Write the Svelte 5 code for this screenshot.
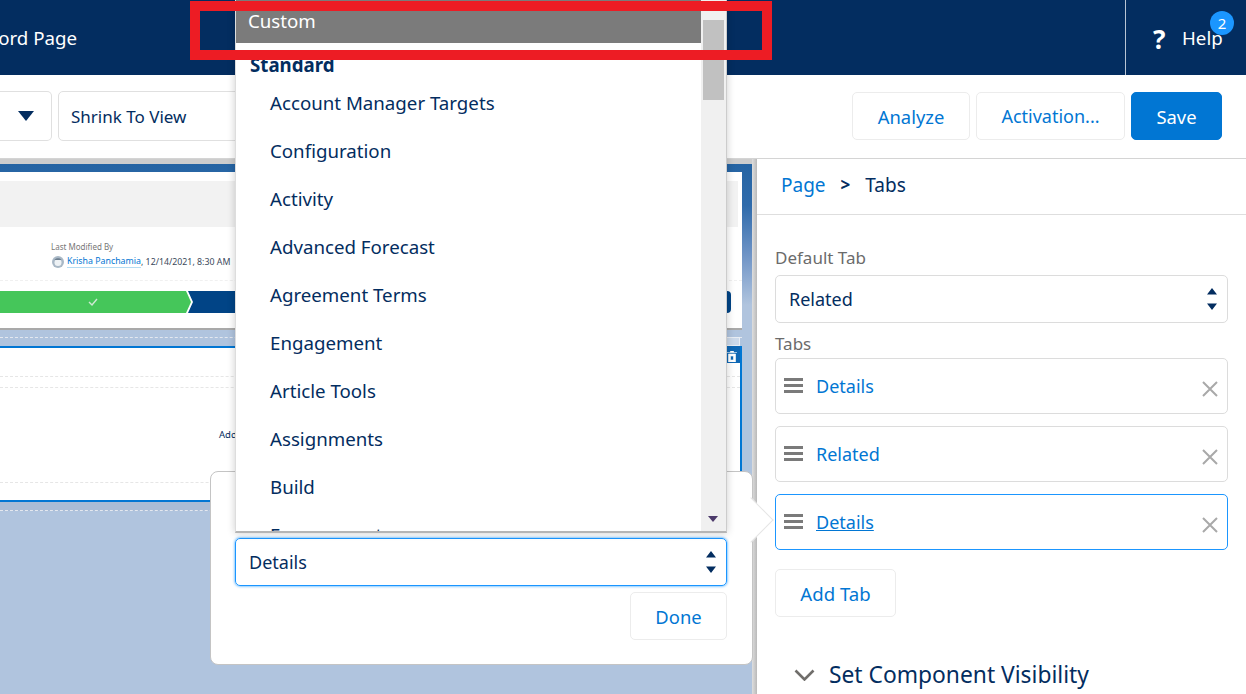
<script>
  const items = ['Account Manager Targets','Configuration','Activity','Advanced Forecast','Agreement Terms','Engagement','Article Tools','Assignments','Build','Engagement'];
</script>

<div class="page">
  <header class="top">
    <div class="title"><span>Record Page</span></div>
    <div class="help">
      <span class="q">?</span>
      <span class="helptxt">Help</span>
      <span class="badge">2</span>
    </div>
  </header>

  <div class="toolbar">
    <div class="tbl">
      <div class="box stub"><span class="tri"></span></div>
      <div class="box shrink">Shrink To View</div>
    </div>
    <div class="tbr">
      <button class="btn an">Analyze</button>
      <button class="btn ac">Activation...</button>
      <button class="btn save">Save</button>
    </div>
  </div>

  <div class="main">
    <div class="canvas">
      <div class="preview">
        <div class="pagehead"><div class="grey"></div>
          <div class="meta">
            <div class="mlabel">Last Modified By</div>
            <div class="mval">
              <svg class="av" width="12" height="12" viewBox="0 0 12 12"><circle cx="6" cy="6" r="6" fill="#a9b8c6"/><circle cx="6" cy="6.500" r="3.500" fill="#eef2f5"/><path d="M2.500 4c1-2.500 6-2.500 7 0z" fill="#6d7f90"/></svg>
              <span class="mlink">Krisha Panchamia</span>, 12/14/2021, 8:30 AM
            </div>
          </div>
          <div class="hr"></div>
          <div class="path">
            <div class="pg"><svg width="10" height="8" viewBox="0 0 10 8"><path d="M1 4l3 3 5-6" fill="none" stroke="#cfe9d4" stroke-width="1.400"/></svg></div>
            <div class="pb"></div>
          </div>
        </div>
      </div>
      <div class="band"></div>
      <div class="tabs">
        <div class="rule1"></div>
        <div class="rule2"></div>
        <div class="add">Add</div>
        <div class="rule3"></div>
        <div class="ghost"></div>
        <div class="tool">
          <svg width="10" height="11" viewBox="0 0 10 11"><path d="M0 1.500h10M3.500 1.500V0h3v1.500M1.500 3h7v8h-7z M3.500 5v4h3V5z" fill="#fff" fill-rule="evenodd" stroke="#fff" stroke-width=".6"/></svg>
        </div>
      </div>
      <div class="bar2"></div>
    </div>
    <div class="gutter"></div>

    <aside class="side">
      <div class="crumbs"><span class="lnk">Page</span><b>&gt;</b><span>Tabs</span></div>
      <div class="sbody">
        <div class="lbl">Default Tab</div>
        <div class="sel">Related
          <svg class="updown" width="10" height="22" viewBox="0 0 10 22"><path d="M5 0l5 6.500h-10z M5 22l-5-6.500h10z" fill="#032d60"/></svg>
        </div>
        <div class="lbl l2">Tabs</div>
        {#each [['Details',false],['Related',false],['Details',true]] as [name, on]}
          <div class="tabrow" class:on>
            <svg class="grip" width="19" height="15" viewBox="0 0 19 15"><path d="M0 1.500h19M0 7.500h19M0 13.500h19" stroke="#7a7a7a" stroke-width="2.800"/></svg>
            <span class="tname" class:u={on}>{name}</span>
            <svg class="x" width="16" height="16" viewBox="0 0 16 16"><path d="M1 1l14 14M15 1l-14 14" stroke="#a9a9a9" stroke-width="2"/></svg>
          </div>
        {/each}
        <button class="btn addtab">Add Tab</button>
        <div class="vis">
          <svg width="21" height="12" viewBox="0 0 21 12"><path d="M1.500 1.500l9 9 9-9" fill="none" stroke="#706e6b" stroke-width="2.600"/></svg>
          <span>Set Component Visibility</span>
        </div>
      </div>
    </aside>
  </div>

  <div class="pop">
    <div class="psel">Details
      <svg class="updown" width="10" height="22" viewBox="0 0 10 22"><path d="M5 0l5 6.500h-10z M5 22l-5-6.500h10z" fill="#032d60"/></svg>
    </div>
    <button class="btn done">Done</button>
    <span class="nub"></span>
  </div>

  <div class="drop">
    <div class="list">
      <div class="custom">Custom</div>
      <div class="std">Standard</div>
      {#each items as it}<div class="it">{it}</div>{/each}
    </div>
    <div class="scroll"><div class="thumb"></div><span class="sdown"></span></div>
  </div>

  <div class="redbox"></div>
</div>

<style>
  :global(body){margin:0;overflow:hidden;background:#fff}
  .page{position:relative;width:1246px;height:694px;overflow:hidden;font-family:"Noto Sans","Open Sans",sans-serif;font-size:18.7px;color:#032d60;display:flex;flex-direction:column}
  .top{height:75px;background:#032d60;color:#fff;display:flex;justify-content:space-between;flex:none}
  .title{width:77px;display:flex;justify-content:flex-end;align-items:center;overflow:hidden;white-space:nowrap;padding-bottom:1px}
  .help{width:120px;border-left:1px solid #b8c4d4;position:relative;display:flex;align-items:center}
  .q{position:absolute;left:27px;top:21px;font-weight:700;font-size:26px;line-height:36px}
  .helptxt{position:absolute;left:56px;top:24px;line-height:28px}
  .badge{position:absolute;left:84px;top:11px;width:24px;height:24px;border-radius:50%;background:#1b96ff;font-size:15px;line-height:24px;text-align:center}
  .toolbar{height:84px;flex:none;display:flex;justify-content:space-between;align-items:flex-start;padding:16px 24px 0 0;box-sizing:border-box;border-bottom:1px solid #d4d4d4}
  .tbl,.tbr{display:flex;gap:6px}
  .box{height:50px;box-sizing:border-box;border:1px solid #e0e0e0;border-radius:5px;display:flex;align-items:center;font-size:17px}
  .stub{width:52px;border-left:none;border-radius:0 5px 5px 0;justify-content:flex-end;padding-right:17px}
  .tri{width:0;height:0;border-left:8px solid transparent;border-right:8px solid transparent;border-top:10px solid #032d60}
  .shrink{width:300px;padding:1px 0 0 12px}
  .btn{font:inherit;background:#fff;color:#0176d3;border:1px solid #ececec;border-radius:5px;height:48px;padding:0;font-size:18.4px}
  .tbr{margin-top:1px}
  .an{width:118px}.ac{width:149px;font-size:18px}
  .save{width:91px;background:#0176d3;color:#fff;border-color:#0176d3}
  .main{flex:1;display:flex;min-height:0}
  .canvas{width:752px;background:#b0c4de;flex:none;border-top:5px solid #cdcdcd;box-sizing:border-box;display:flex;flex-direction:column}
  .gutter{width:5px;flex:none;background:linear-gradient(90deg,#dedede,#b9b9b9)}
  .preview{height:166px;flex:none;padding-top:8px;box-sizing:border-box;background:linear-gradient(180deg,#2564a3 0,#2f6bab 25%,#6f94c6 55%,#b0c4de 85%)}
  .pagehead{position:relative;width:742px;height:158px;box-sizing:border-box;background:#fff;border-bottom:2px solid #a9a9a9}
  .grey{position:absolute;left:0;right:4px;top:9px;height:46px;background:#f2f2f2}
  .meta{position:absolute;left:51px;top:69px;font-size:8px;line-height:11px;color:#777;white-space:nowrap}
  .mval{display:flex;align-items:center;margin-top:4px;color:#3b4a5c;font-size:8.800px;white-space:pre}
  .av{margin:0 3px 0 1px;flex:none}
  .mlink{color:#0176d3;border-bottom:1px solid #b5dcf3}
  .hr{position:absolute;left:0;right:0;top:108px;border-top:1px dashed #f0f0f0}
  .path{position:absolute;left:0;width:731px;top:119px;height:22px;display:flex}
  .pg{width:191px;box-sizing:border-box;padding-right:6px;flex:none;background:#45c65a;display:flex;align-items:center;justify-content:center;clip-path:polygon(0 0,calc(100% - 5px) 0,100% 50%,calc(100% - 5px) 100%,0 100%)}
  .pb{flex:1;background:#014486;margin-left:-3px;border-radius:0 4px 4px 0;clip-path:polygon(0 0,100% 0,100% 100%,0 100%,5px 50%)}
  .band{width:742px;height:7px;flex:none;border-bottom:1px dashed #e4e8ef;margin-bottom:8px}
  .tabs{position:relative;width:742px;height:156px;box-sizing:border-box;background:#fff;border-top:2px solid #0176d3;border-bottom:2px solid #0176d3;border-right:2px solid #0176d3;flex:none}
  .rule1,.rule2,.rule3{position:absolute;left:0;right:0;border-top:1px dashed #e6e6e6}
  .rule1{top:28px}.rule2{top:39px}.rule3{top:134px}
  .add{position:absolute;left:219px;top:81px;font-size:9.500px;line-height:12px;color:#032d60}
  .ghost{position:absolute;left:700px;right:0;top:-11px;height:9px;background:#ccd9ea;border:1px solid #e8edf4;box-sizing:border-box}
  .tool{position:absolute;left:700px;right:0;top:-2px;height:17px;background:#0f68b5;display:flex;align-items:center;padding:3px 0 0 27px;box-sizing:border-box}
  .bar2{height:8px;width:100%;background:#a9bcd6;border-bottom:1px dashed #e4e8ef}
  .side{flex:1;background:#fff;min-width:0}
  .crumbs{height:56px;box-sizing:border-box;border-bottom:1px solid #dedede;display:flex;align-items:center;gap:15px;padding:0 0 4px 24px;font-size:19px}
  .crumbs b{font-size:17px}
  .lnk{color:#0176d3}
  .sbody{padding:30px 18px 0 18px}
  .lbl{font-size:17px;color:#6b6b6b;line-height:26px}
  .l2{margin-top:8px;margin-bottom:1px}
  .sel,.psel{position:relative;height:48px;box-sizing:border-box;border:1px solid #dcdcdc;border-radius:5px;display:flex;align-items:center;padding-left:13px;margin-top:4px;font-size:18px}
  .updown{position:absolute;right:10px;top:12px}
  .tabrow{position:relative;height:56px;box-sizing:border-box;border:1px solid #dcdcdc;border-radius:5px;margin-bottom:12px;display:flex;align-items:center;padding:0 0 1px 8px}
  .tabrow.on{border-color:#1b96ff}
  .grip{flex:none}
  .tname{margin-left:13px;color:#0176d3;font-size:18px}
  .u{text-decoration:underline}
  .x{position:absolute;right:9px;top:22px}
  .addtab{width:121px;display:block;margin-top:19px;font-size:18.600px}
  .vis{display:flex;align-items:center;gap:14px;margin:43px 0 0 19px;white-space:nowrap;font-size:22.800px;line-height:30px}
  .pop{position:absolute;left:210px;top:471px;width:543px;height:194px;box-sizing:border-box;background:#fff;border:1px solid #c4c4c4;border-radius:8px}
  .psel{position:absolute;left:24px;top:66px;width:492px;margin:0;border-color:#1b96ff;box-shadow:0 0 3px #1b96ff}
  .done{position:absolute;left:419px;top:120px;width:97px}
  .nub{position:absolute;left:524px;top:32px;width:32px;height:32px;background:#fff;transform:rotate(45deg);border:1px solid #e5e5e5;border-left:none;border-bottom:none;box-sizing:border-box}
  .drop{position:absolute;left:235px;top:0;width:492px;height:533px;background:#fff;display:flex;border-bottom:2px solid #b5b5b5;border-right:1px solid #ccc;border-left:1px solid #ddd;box-sizing:border-box;box-shadow:0 0 8px rgba(0,0,0,.2)}
  .list{flex:1;overflow:hidden;min-width:0}
  .custom{height:43px;background:#7b7b7b;color:#fff;padding-left:12px;line-height:42px;box-sizing:border-box}
  .std{font-weight:700;padding-left:14px;line-height:28px;margin-top:8px}
  .it{height:48px;line-height:48px;padding-left:34px;white-space:nowrap}
  .scroll{width:25px;background:#f0f0f0;position:relative;flex:none}
  .thumb{position:absolute;left:2px;top:20px;width:21px;height:80px;background:#c1c1c1}
  .sdown{position:absolute;left:7px;bottom:9px;border-left:5px solid transparent;border-right:5px solid transparent;border-top:6px solid #4c3a6b}
  .redbox{position:absolute;left:190px;top:1px;width:582px;height:59px;box-sizing:border-box;border:10px solid #ed1c24}
</style>
